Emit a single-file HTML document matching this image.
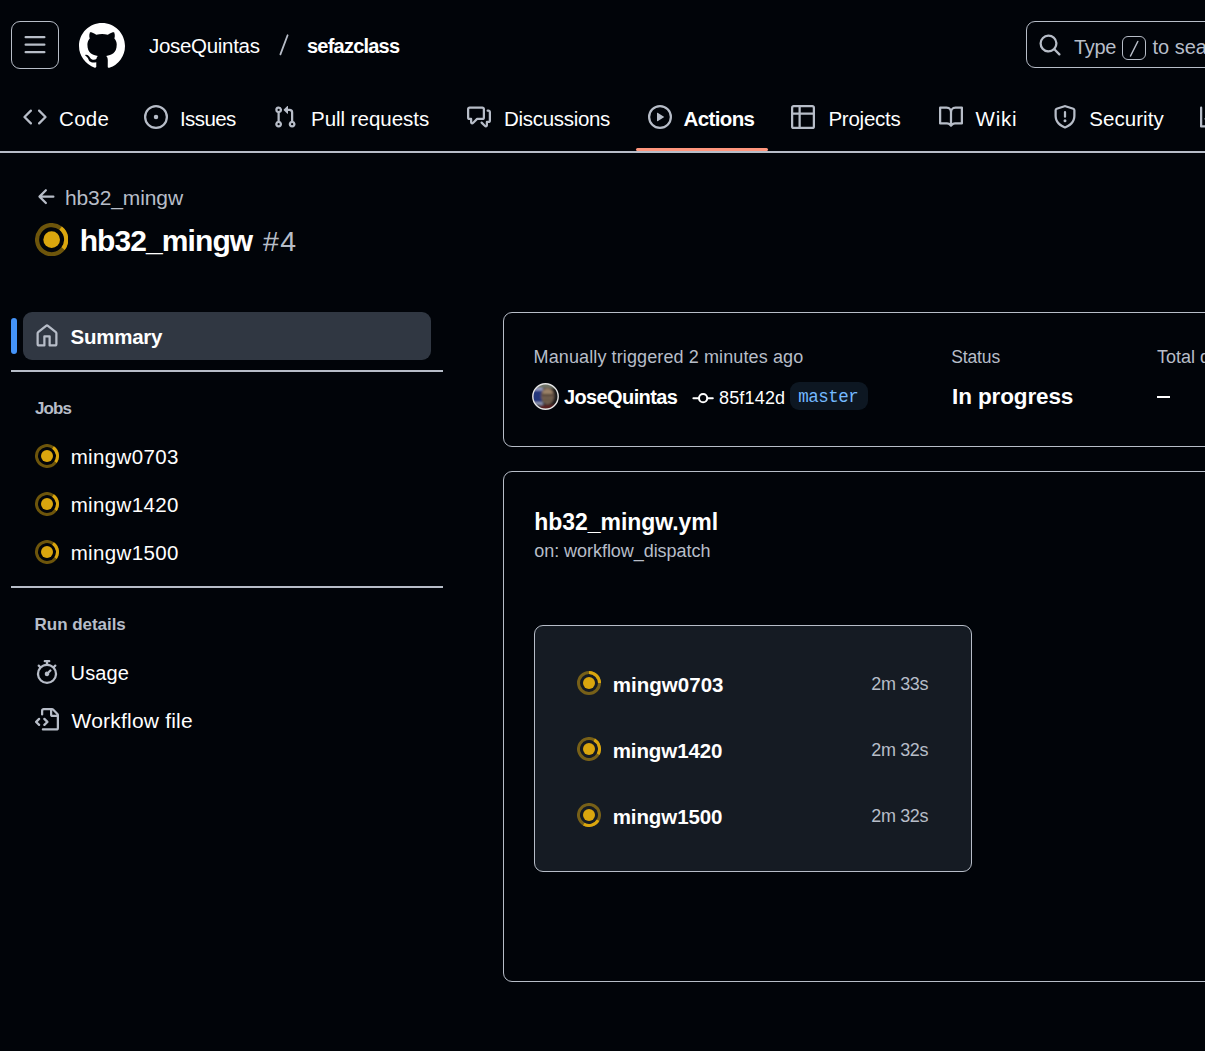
<!DOCTYPE html>
<html><head><meta charset="utf-8"><title>hb32_mingw #4</title>
<style>
html,body{margin:0;padding:0;background:#010409;width:1205px;height:1051px;overflow:hidden;position:relative;font-family:"Liberation Sans",sans-serif;color:#fff}
.a{position:absolute}
.t{position:absolute;white-space:nowrap;line-height:1}
.b{font-weight:bold}
.m{color:#b7bdc8}
svg.i{position:absolute;fill:#b7bdc8}
</style></head><body>

<!-- HEADER -->
<div class="a" style="left:11px;top:21px;width:46px;height:46px;border:1px solid #b7bdc8;border-radius:9px"></div>
<svg class="i" style="left:23px;top:33px" width="24" height="24" viewBox="0 0 16 16"><path d="M1 2.75A.75.75 0 0 1 1.750 2h12.5a.75.75 0 0 1 0 1.5H1.75A.75.75 0 0 1 1 2.75Zm0 5A.75.75 0 0 1 1.75 7h12.5a.75.75 0 0 1 0 1.5H1.75A.75.75 0 0 1 1 7.75ZM1.75 12h12.5a.75.75 0 0 1 0 1.5H1.75a.75.75 0 0 1 0-1.5Z"/></svg>
<svg class="i" style="left:79px;top:22.5px;fill:#fff" width="46" height="46" viewBox="0 0 16 16"><path d="M8 0c4.42 0 8 3.58 8 8a8.013 8.013 0 0 1-5.45 7.590c-.4.08-.55-.17-.55-.38 0-.27.01-1.15.01-2.24 0-.76-.25-1.25-.54-1.5 1.78-.2 3.650-.88 3.650-3.950 0-.88-.31-1.59-.82-2.15.08-.2.36-1.02-.08-2.12 0 0-.67-.22-2.2.82-.64-.18-1.32-.27-2-.27-.68 0-1.36.09-2 .27-1.53-1.030-2.2-.82-2.2-.82-.44 1.1-.16 1.92-.08 2.12-.51.56-.82 1.28-.82 2.15 0 3.06 1.86 3.75 3.64 3.95-.23.2-.44.55-.51 1.07-.46.21-1.61.55-2.33-.66-.15-.24-.6-.83-1.23-.82-.67.01-.27.38.01.53.34.19.73.9.82 1.13.16.45.68 1.31 2.69.94 0 .67.01 1.3.01 1.49 0 .21-.15.45-.55.38A7.995 7.995 0 0 1 0 8c0-4.42 3.58-8 8-8Z"/></svg>
<svg class="a" style="left:270px;top:28px" width="30" height="34"><line x1="17.6" y1="7.3" x2="10.4" y2="26.4" stroke="#b7bdc8" stroke-width="1.8" stroke-linecap="round"/></svg>

<div class="a" style="left:1026px;top:21px;width:400px;height:45px;border:1px solid #b7bdc8;border-radius:9px"></div>
<svg class="i" style="left:1038px;top:33px" width="24" height="24" viewBox="0 0 16 16"><path d="M10.68 11.74a6 6 0 0 1-7.922-8.982 6 6 0 0 1 8.982 7.922l3.04 3.04a.749.749 0 0 1-.326 1.275.749.749 0 0 1-.734-.215ZM11.5 7a4.499 4.499 0 1 0-8.997 0A4.499 4.499 0 0 0 11.5 7Z"/></svg>
<div class="a" style="left:1122px;top:36px;width:22px;height:22px;border:1px solid #b7bdc8;border-radius:6px"></div>
<svg class="a" style="left:1122px;top:36px" width="24" height="24"><line x1="15.8" y1="5.5" x2="8.5" y2="20" stroke="#b7bdc8" stroke-width="1.5" stroke-linecap="round"/></svg>

<!-- NAV -->
<div class="a" style="left:0;top:151px;width:1205px;height:1.5px;background:#b7bdc8"></div>
<div class="a" style="left:636px;top:148px;width:132px;height:3px;background:#ff967d;border-radius:2px"></div>

<svg class="i" style="left:23px;top:105px" width="24" height="24" viewBox="0 0 16 16"><path d="m11.28 3.22 4.25 4.25a.75.75 0 0 1 0 1.06l-4.25 4.25a.749.749 0 0 1-1.275-.326.749.749 0 0 1 .215-.734L13.94 8l-3.72-3.72a.749.749 0 0 1 .326-1.275.749.749 0 0 1 .734.215Zm-6.56 0a.751.751 0 0 1 1.042.018.751.751 0 0 1 .018 1.042L2.06 8l3.72 3.72a.749.749 0 0 1-.326 1.275.749.749 0 0 1-.734-.215L.47 8.53a.75.75 0 0 1 0-1.06Z"/></svg>

<svg class="i" style="left:144px;top:105px" width="24" height="24" viewBox="0 0 16 16"><path d="M8 9.5a1.5 1.5 0 1 0 0-3 1.5 1.5 0 0 0 0 3Z"/><path d="M8 0a8 8 0 1 1 0 16A8 8 0 0 1 8 0ZM1.5 8a6.5 6.5 0 1 0 13 0 6.5 6.5 0 0 0-13 0Z"/></svg>

<svg class="i" style="left:273px;top:105px" width="24" height="24" viewBox="0 0 16 16"><path d="M1.5 3.25a2.25 2.25 0 1 1 3 2.122v5.256a2.251 2.251 0 1 1-1.5 0V5.372A2.25 2.25 0 0 1 1.5 3.25Zm5.677-.177L9.573.677A.25.25 0 0 1 10 .854V2.5h1A2.5 2.5 0 0 1 13.5 5v5.628a2.251 2.251 0 1 1-1.5 0V5a1 1 0 0 0-1-1h-1v1.646a.25.25 0 0 1-.427.177L7.177 3.427a.25.25 0 0 1 0-.354ZM3.75 2.5a.75.75 0 1 0 0 1.5.75.75 0 0 0 0-1.5Zm0 9.5a.75.75 0 1 0 0 1.5.75.75 0 0 0 0-1.5Zm8.25.75a.75.75 0 1 0 1.5 0 .75.75 0 0 0-1.5 0Z"/></svg>

<svg class="i" style="left:467px;top:105px" width="24" height="24" viewBox="0 0 16 16"><path d="M1.75 1h8.5c.966 0 1.75.784 1.75 1.75v5.5A1.75 1.75 0 0 1 10.25 10H7.061l-2.574 2.573A1.458 1.458 0 0 1 2 11.543V10h-.25A1.75 1.75 0 0 1 0 8.25v-5.5C0 1.784.784 1 1.75 1ZM1.5 2.75v5.5c0 .138.112.25.25.25h1a.75.75 0 0 1 .75.75v2.19l2.720-2.720a.749.749 0 0 1 .53-.22h3.5a.25.25 0 0 0 .25-.25v-5.5a.25.25 0 0 0-.25-.25h-8.5a.25.25 0 0 0-.25.25Zm13 2a.25.25 0 0 0-.25-.25h-.5a.75.75 0 0 1 0-1.5h.5c.966 0 1.75.784 1.75 1.75v5.5A1.75 1.75 0 0 1 14.25 12H14v1.543a1.458 1.458 0 0 1-2.487 1.03L9.22 12.28a.749.749 0 0 1 .326-1.275.749.749 0 0 1 .734.215l2.22 2.22v-2.19a.75.75 0 0 1 .75-.75h1a.25.25 0 0 0 .25-.25Z"/></svg>

<svg class="i" style="left:648px;top:105px" width="24" height="24" viewBox="0 0 16 16"><path d="M8 0a8 8 0 1 1 0 16A8 8 0 0 1 8 0ZM1.5 8a6.5 6.5 0 1 0 13 0 6.5 6.5 0 0 0-13 0Zm4.879-2.773 4.264 2.559a.25.25 0 0 1 0 .428l-4.264 2.559A.25.25 0 0 1 6 10.559V5.442a.25.25 0 0 1 .379-.215Z"/></svg>

<svg class="i" style="left:791px;top:105px" width="24" height="24" viewBox="0 0 16 16"><path d="M0 1.75C0 .784.784 0 1.75 0h12.5C15.216 0 16 .784 16 1.75v12.5A1.75 1.75 0 0 1 14.25 16H1.75A1.75 1.75 0 0 1 0 14.25ZM6.5 6.5v8h7.75a.25.25 0 0 0 .25-.25V6.5Zm8-1.5V1.75a.25.25 0 0 0-.25-.25H6.5V5Zm-13 1.5v7.75c0 .138.112.25.25.25H5v-8ZM5 5V1.5H1.750a.25.25 0 0 0-.25.25V5Z"/></svg>

<svg class="i" style="left:939px;top:105px" width="24" height="24" viewBox="0 0 16 16"><path d="M0 1.75A.75.75 0 0 1 .75 1h4.253c1.227 0 2.317.59 3 1.501A3.743 3.743 0 0 1 11.006 1h4.245a.75.75 0 0 1 .75.75v10.5a.75.75 0 0 1-.75.75h-4.507a2.25 2.25 0 0 0-1.591.659l-.622.621a.75.75 0 0 1-1.060 0l-.622-.621A2.25 2.25 0 0 0 5.258 13H.75a.75.75 0 0 1-.75-.75Zm7.251 10.324.004-5.073-.002-2.253A2.25 2.25 0 0 0 5.003 2.5H1.5v9h3.757a3.75 3.75 0 0 1 1.994.574ZM8.755 4.75l-.004 7.322a3.752 3.752 0 0 1 1.992-.572H14.5v-9h-3.495a2.25 2.25 0 0 0-2.25 2.25Z"/></svg>

<svg class="i" style="left:1053px;top:105px" width="24" height="24" viewBox="0 0 16 16"><path d="M7.467.133a1.748 1.748 0 0 1 1.066 0l5.25 1.68A1.75 1.75 0 0 1 15 3.48V7c0 1.566-.32 3.182-1.303 4.682-.983 1.498-2.585 2.813-5.032 3.855a1.697 1.697 0 0 1-1.33 0c-2.447-1.042-4.049-2.357-5.032-3.855C1.32 10.182 1 8.566 1 7V3.48a1.755 1.755 0 0 1 1.217-1.667Zm.61 1.429a.25.25 0 0 0-.153 0l-5.25 1.68a.25.25 0 0 0-.174.238V7c0 1.358.275 2.666 1.057 3.86.784 1.194 2.121 2.34 4.366 3.297a.196.196 0 0 0 .154 0c2.245-.956 3.582-2.104 4.366-3.298C13.225 9.666 13.5 8.36 13.5 7V3.48a.251.251 0 0 0-.174-.237l-5.25-1.68ZM8.75 4.75v3a.75.75 0 0 1-1.5 0v-3a.75.75 0 0 1 1.5 0ZM9 10.5a1 1 0 1 1-2 0 1 1 0 0 1 2 0Z"/></svg>

<svg class="i" style="left:1200px;top:105px" width="24" height="24" viewBox="0 0 16 16"><path d="M1.5 1.75V13.5h13.75a.75.75 0 0 1 0 1.5H.75a.75.75 0 0 1-.75-.75V1.75a.75.75 0 0 1 1.5 0Zm14.28 2.53-5.25 5.25a.75.75 0 0 1-1.06 0L7 7.06 4.28 9.78a.751.751 0 0 1-1.042-.018.751.751 0 0 1-.018-1.042l3.25-3.25a.75.75 0 0 1 1.06 0L10 7.94l4.72-4.72a.751.751 0 0 1 1.042.018.751.751 0 0 1 .018 1.042Z"/></svg>


<!-- PAGE HEADER -->
<svg class="i" style="left:35px;top:185px" width="24" height="24" viewBox="0 0 16 16"><path d="M7.78 12.53a.75.75 0 0 1-1.06 0L2.47 8.28a.75.75 0 0 1 0-1.06l4.25-4.25a.751.751 0 0 1 1.042.018.751.751 0 0 1 .018 1.042L4.81 7h7.44a.75.75 0 0 1 0 1.5H4.81l2.97 2.97a.75.75 0 0 1 0 1.06Z"/></svg>
<svg class="a" style="left:35.05px;top:222.65px" width="33.3" height="33.3" viewBox="0 0 16 16" fill="none"><g transform="rotate(-52 8 8)"><path opacity=".5" d="M8 15A7 7 0 1 0 8 1a7 7 0 0 0 0 14v0z" stroke="#daa60e" stroke-width="2"/><path d="M15 8a7 7 0 0 1-7 7" stroke="#daa60e" stroke-width="2"/></g><path d="M8 12a4 4 0 1 0 0-8 4 4 0 0 0 0 8z" fill="#daa60e"/></svg>

<!-- SIDEBAR -->
<div class="a" style="left:11px;top:318px;width:6px;height:36px;background:#4493f8;border-radius:3px"></div>
<div class="a" style="left:23px;top:312px;width:408px;height:48px;background:#303742;border-radius:9px"></div>
<svg class="i" style="left:35px;top:324px" width="24" height="24" viewBox="0 0 16 16"><path d="M6.906.664a1.749 1.749 0 0 1 2.187 0l5.25 4.2c.415.332.657.835.657 1.367v7.019A1.75 1.75 0 0 1 13.25 15h-3.5a.75.75 0 0 1-.75-.75V9H7v5.25a.75.75 0 0 1-.75.75h-3.5A1.75 1.75 0 0 1 1 13.250V6.23c0-.531.242-1.034.657-1.366l5.25-4.2Zm1.25 1.171a.25.25 0 0 0-.312 0l-5.25 4.2a.25.25 0 0 0-.094.196v7.019c0 .138.112.25.25.25H5.5V8.25a.75.75 0 0 1 .75-.75h3.5a.75.75 0 0 1 .75.75v5.25h2.75a.25.25 0 0 0 .25-.25V6.23a.25.25 0 0 0-.094-.195Z"/></svg>
<div class="a" style="left:11px;top:370px;width:432px;height:2px;background:#b7bdc8"></div>

<svg class="a" style="left:35px;top:443.8px" width="24" height="24" viewBox="0 0 16 16" fill="none"><g transform="rotate(-55 8 8)"><path opacity=".5" d="M8 15A7 7 0 1 0 8 1a7 7 0 0 0 0 14v0z" stroke="#daa60e" stroke-width="2"/><path d="M15 8a7 7 0 0 1-7 7" stroke="#daa60e" stroke-width="2"/></g><path d="M8 12a4 4 0 1 0 0-8 4 4 0 0 0 0 8z" fill="#daa60e"/></svg>
<svg class="a" style="left:35px;top:491.8px" width="24" height="24" viewBox="0 0 16 16" fill="none"><g transform="rotate(-55 8 8)"><path opacity=".5" d="M8 15A7 7 0 1 0 8 1a7 7 0 0 0 0 14v0z" stroke="#daa60e" stroke-width="2"/><path d="M15 8a7 7 0 0 1-7 7" stroke="#daa60e" stroke-width="2"/></g><path d="M8 12a4 4 0 1 0 0-8 4 4 0 0 0 0 8z" fill="#daa60e"/></svg>
<svg class="a" style="left:35px;top:540px" width="24" height="24" viewBox="0 0 16 16" fill="none"><g transform="rotate(-55 8 8)"><path opacity=".5" d="M8 15A7 7 0 1 0 8 1a7 7 0 0 0 0 14v0z" stroke="#daa60e" stroke-width="2"/><path d="M15 8a7 7 0 0 1-7 7" stroke="#daa60e" stroke-width="2"/></g><path d="M8 12a4 4 0 1 0 0-8 4 4 0 0 0 0 8z" fill="#daa60e"/></svg>


<div class="a" style="left:11px;top:586px;width:432px;height:2px;background:#b7bdc8"></div>

<svg class="i" style="left:35px;top:660px" width="24" height="24" viewBox="0 0 16 16"><path d="M5.75.75A.75.75 0 0 1 6.5 0h3a.75.75 0 0 1 0 1.5h-.75v1l-.001.041a6.724 6.724 0 0 1 3.464 1.435l.007-.006.75-.75a.75.75 0 1 1 1.06 1.06l-.75.75-.006.007a6.75 6.75 0 1 1-10.548 0L2.72 5.03l-.75-.75a.751.751 0 0 1 .018-1.042.751.751 0 0 1 1.042-.018l.75.75.007.006A6.72 6.72 0 0 1 7.25 2.541V1.5H6.5a.75.75 0 0 1-.75-.75ZM8 14.5A5.25 5.25 0 1 0 8 4a5.25 5.25 0 0 0 0 10.5Zm.389-6.7 1.33-1.33a.75.75 0 1 1 1.061 1.06L9.45 8.861A1.503 1.503 0 0 1 8 10.75a1.499 1.499 0 1 1 .389-2.95Z"/></svg>
<svg class="i" style="left:35px;top:708px" width="24" height="24" viewBox="0 0 16 16"><path d="M4 1.75C4 .784 4.784 0 5.75 0h5.586c.464 0 .909.184 1.237.513l2.914 2.914c.329.328.513.773.513 1.237v8.586A1.75 1.75 0 0 1 14.25 15h-9a.75.75 0 0 1 0-1.5h9a.25.25 0 0 0 .25-.25V6h-2.75A1.75 1.75 0 0 1 10 4.25V1.5H5.75a.25.25 0 0 0-.25.25v2.5a.75.75 0 0 1-1.5 0Zm1.72 4.97a.75.75 0 0 1 1.06 0l2 2a.75.75 0 0 1 0 1.06l-2 2a.749.749 0 0 1-1.275-.326.749.749 0 0 1 .215-.734l1.47-1.47-1.470-1.470a.75.75 0 0 1 0-1.06ZM3.28 7.78 1.81 9.25l1.47 1.47a.751.751 0 0 1-.018 1.042.751.751 0 0 1-1.042.018l-2-2a.75.75 0 0 1 0-1.06l2-2a.751.751 0 0 1 1.042.018.751.751 0 0 1 .018 1.042Zm8.22-6.218V4.25c0 .138.112.25.25.25h2.688l-.011-.013-2.914-2.914-.013-.011Z"/></svg>

<!-- CARD 1 -->
<div class="a" style="left:503px;top:312px;width:800px;height:133px;border:1px solid #b7bdc8;border-radius:9px"></div>
<svg class="a" style="left:532.2px;top:383.2px" width="27" height="27" viewBox="0 0 27 27"><defs><clipPath id="av"><circle cx="13.5" cy="13.5" r="12.6"/></clipPath><filter id="bl"><feGaussianBlur stdDeviation="0.8"/></filter></defs><g clip-path="url(#av)"><rect width="27" height="27" fill="#2d2c30"/><g filter="url(#bl)"><rect x="0" y="6" width="10" height="15" fill="#22347a"/><rect x="2" y="4.5" width="9" height="3" fill="#9da3c8"/><rect x="2" y="19" width="9" height="3" fill="#8a93b0"/><rect x="14" y="0" width="13" height="27" fill="#1d1a1a"/><rect x="4" y="0" width="20" height="5" fill="#6f7468"/><ellipse cx="15.5" cy="13" rx="6.5" ry="8.5" fill="#735f50"/><ellipse cx="15.5" cy="9.5" rx="5" ry="3.5" fill="#9c8268"/><rect x="10" y="11" width="11" height="2" fill="#4a3a33"/><ellipse cx="15.5" cy="17" rx="4.5" ry="2" fill="#6a5a48"/><rect x="8" y="22" width="17" height="6" fill="#5a2020"/></g></g><circle cx="13.5" cy="13.5" r="12.7" fill="none" stroke="#e6e6e6" stroke-width="1.4"/></svg>
<svg class="a" style="left:688px;top:386px" width="30" height="24"><line x1="5.4" y1="12.2" x2="24.8" y2="12.2" stroke="#fff" stroke-width="2" stroke-linecap="round"/><circle cx="15.1" cy="12.2" r="4.1" fill="#010409" stroke="#fff" stroke-width="2"/></svg>
<div class="a" style="left:790px;top:382px;width:78px;height:28px;background:#0d1722;border-radius:9px"></div>
<div class="a" style="left:1157px;top:396px;width:13px;height:2px;background:#fff"></div>

<!-- CARD 2 -->
<div class="a" style="left:503px;top:471px;width:800px;height:509px;border:1px solid #b7bdc8;border-radius:9px"></div>
<div class="a" style="left:534px;top:625px;width:436px;height:245px;background:#151b23;border:1px solid #b7bdc8;border-radius:9px"></div>
<svg class="a" style="left:577px;top:670.8px" width="24" height="24" viewBox="0 0 16 16" fill="none"><g transform="rotate(-90 8 8)"><path opacity=".5" d="M8 15A7 7 0 1 0 8 1a7 7 0 0 0 0 14v0z" stroke="#daa60e" stroke-width="2"/><path d="M15 8a7 7 0 0 1-7 7" stroke="#daa60e" stroke-width="2"/></g><path d="M8 12a4 4 0 1 0 0-8 4 4 0 0 0 0 8z" fill="#daa60e"/></svg>
<svg class="a" style="left:577px;top:737.2px" width="24" height="24" viewBox="0 0 16 16" fill="none"><g transform="rotate(-60 8 8)"><path opacity=".5" d="M8 15A7 7 0 1 0 8 1a7 7 0 0 0 0 14v0z" stroke="#daa60e" stroke-width="2"/><path d="M15 8a7 7 0 0 1-7 7" stroke="#daa60e" stroke-width="2"/></g><path d="M8 12a4 4 0 1 0 0-8 4 4 0 0 0 0 8z" fill="#daa60e"/></svg>
<svg class="a" style="left:577px;top:802.8px" width="24" height="24" viewBox="0 0 16 16" fill="none"><g transform="rotate(30 8 8)"><path opacity=".5" d="M8 15A7 7 0 1 0 8 1a7 7 0 0 0 0 14v0z" stroke="#daa60e" stroke-width="2"/><path d="M15 8a7 7 0 0 1-7 7" stroke="#daa60e" stroke-width="2"/></g><path d="M8 12a4 4 0 1 0 0-8 4 4 0 0 0 0 8z" fill="#daa60e"/></svg>


<div class="t" style="left:149.00px;top:36.00px;font-size:20.5px;color:#fff;letter-spacing:-0.30px">JoseQuintas</div>
<div class="t" style="left:307.00px;top:35.50px;font-size:20px;color:#fff;font-weight:bold;letter-spacing:-0.78px">sefazclass</div>
<div class="t" style="left:1074.00px;top:36.70px;font-size:20px;color:#b7bdc8;letter-spacing:-0.33px">Type</div>
<div class="t" style="left:1152.40px;top:36.70px;font-size:20px;color:#b7bdc8">to search</div>
<div class="t" style="left:59.00px;top:109.00px;font-size:20.5px;color:#fff;letter-spacing:0.33px">Code</div>
<div class="t" style="left:180.00px;top:109.00px;font-size:20.5px;color:#fff;letter-spacing:-0.60px">Issues</div>
<div class="t" style="left:311.00px;top:109.00px;font-size:20.5px;color:#fff;letter-spacing:-0.02px">Pull requests</div>
<div class="t" style="left:504.00px;top:109.00px;font-size:20.5px;color:#fff;letter-spacing:-0.30px">Discussions</div>
<div class="t" style="left:683.60px;top:108.50px;font-size:20.5px;color:#fff;font-weight:bold;letter-spacing:-0.63px">Actions</div>
<div class="t" style="left:828.40px;top:109.00px;font-size:20.5px;color:#fff;letter-spacing:-0.24px">Projects</div>
<div class="t" style="left:975.60px;top:109.00px;font-size:20.5px;color:#fff;letter-spacing:0.73px">Wiki</div>
<div class="t" style="left:1089.30px;top:109.00px;font-size:20.5px;color:#fff;letter-spacing:0.04px">Security</div>
<div class="t" style="left:64.90px;top:186.80px;font-size:21px;color:#b7bdc8;letter-spacing:-0.10px">hb32_mingw</div>
<div class="t" style="left:79.70px;top:225.50px;font-size:30px;color:#fff;font-weight:bold;letter-spacing:-0.91px">hb32_mingw</div>
<div class="t" style="left:263.00px;top:226.50px;font-size:28.5px;color:#b7bdc8;letter-spacing:1.50px">#4</div>
<div class="t" style="left:70.50px;top:327.00px;font-size:20.5px;color:#fff;font-weight:bold;letter-spacing:-0.25px">Summary</div>
<div class="t" style="left:35.00px;top:399.60px;font-size:17px;color:#b7bdc8;font-weight:bold;letter-spacing:-0.93px">Jobs</div>
<div class="t" style="left:70.70px;top:446.60px;font-size:20.5px;color:#fff;letter-spacing:0.35px">mingw0703</div>
<div class="t" style="left:70.70px;top:494.60px;font-size:20.5px;color:#fff;letter-spacing:0.35px">mingw1420</div>
<div class="t" style="left:70.70px;top:542.60px;font-size:20.5px;color:#fff;letter-spacing:0.35px">mingw1500</div>
<div class="t" style="left:34.60px;top:615.80px;font-size:17px;color:#b7bdc8;font-weight:bold;letter-spacing:-0.04px">Run details</div>
<div class="t" style="left:70.60px;top:662.80px;font-size:20px;color:#fff;letter-spacing:0.10px">Usage</div>
<div class="t" style="left:71.60px;top:709.80px;font-size:21px;color:#fff;letter-spacing:0.20px">Workflow file</div>
<div class="t" style="left:533.60px;top:347.90px;font-size:18px;color:#b7bdc8;letter-spacing:0.11px">Manually triggered 2 minutes ago</div>
<div class="t" style="left:564.00px;top:386.80px;font-size:20px;color:#fff;font-weight:bold;letter-spacing:-0.62px">JoseQuintas</div>
<div class="t" style="left:719.00px;top:389.00px;font-size:18px;color:#fff;letter-spacing:0.17px">85f142d</div>
<div class="t" style="left:798.30px;top:388.90px;font-size:17.5px;color:#74b9ff;font-family:'Liberation Mono',monospace;letter-spacing:-0.50px">master</div>
<div class="t" style="left:951.20px;top:348.90px;font-size:17.5px;color:#b7bdc8;letter-spacing:-0.12px">Status</div>
<div class="t" style="left:952.10px;top:385.90px;font-size:22.5px;color:#fff;font-weight:bold;letter-spacing:-0.13px">In progress</div>
<div class="t" style="left:1157.10px;top:347.90px;font-size:18px;color:#b7bdc8">Total duration</div>
<div class="t" style="left:534.30px;top:510.60px;font-size:23px;color:#fff;font-weight:bold;letter-spacing:-0.05px">hb32_mingw.yml</div>
<div class="t" style="left:534.30px;top:542.30px;font-size:18px;color:#b7bdc8;letter-spacing:-0.05px">on: workflow_dispatch</div>
<div class="t" style="left:612.70px;top:674.80px;font-size:20.5px;color:#fff;font-weight:bold;letter-spacing:0.04px">mingw0703</div>
<div class="t" style="left:612.70px;top:740.80px;font-size:20.5px;color:#fff;font-weight:bold;letter-spacing:-0.09px">mingw1420</div>
<div class="t" style="left:612.70px;top:806.80px;font-size:20.5px;color:#fff;font-weight:bold;letter-spacing:-0.09px">mingw1500</div>
<div class="t" style="left:871.30px;top:675.10px;font-size:18px;color:#b7bdc8;letter-spacing:-0.38px">2m 33s</div>
<div class="t" style="left:871.30px;top:741.10px;font-size:18px;color:#b7bdc8;letter-spacing:-0.38px">2m 32s</div>
<div class="t" style="left:871.30px;top:807.10px;font-size:18px;color:#b7bdc8;letter-spacing:-0.38px">2m 32s</div>
</body></html>
